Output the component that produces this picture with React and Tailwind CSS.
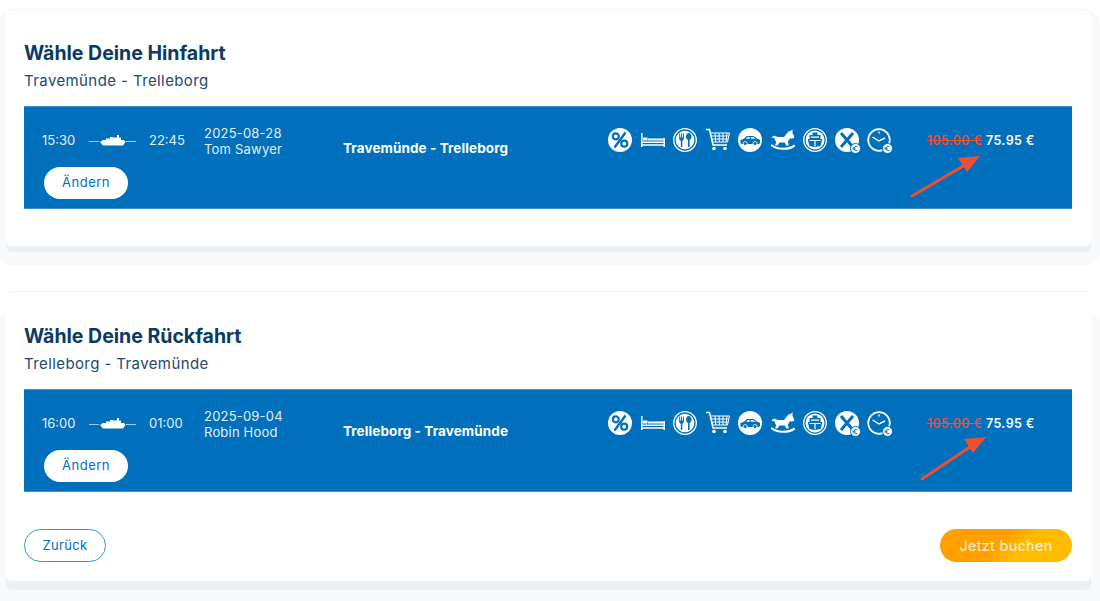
const FONT = { fontFamily: 'Inter' };

function ShipLine() {
  return (
    <svg width="48" height="14" viewBox="0 0 48 14" className="shrink-0">
      <path d="M0 7.500h10M37 7.500h10" stroke="#a9cbe6" strokeWidth="1" />
      <path d="M11 8l3-2h3V4.500h4V3h3v.5h4V1h2v2.500h2V6h3l1.500 2-2.500 3.500H14z" fill="#fff" />
    </svg>
  );
}

function Percent() {
  return (
    <svg width="24" height="24" viewBox="0 0 24 24">
      <circle cx="12" cy="12" r="12" fill="#fff" />
      <circle cx="7.800" cy="8.300" r="3" fill="none" stroke="#0070bc" strokeWidth="2.200" />
      <circle cx="16.200" cy="15.700" r="3" fill="none" stroke="#0070bc" strokeWidth="2.200" />
      <path d="M17.500 4.500L6.500 19.500" stroke="#0070bc" strokeWidth="2.400" />
    </svg>
  );
}

function Bed() {
  return (
    <svg width="24" height="24" viewBox="0 0 24 24">
      <path d="M.8 5v14M23.200 10v9" stroke="#fff" strokeWidth="1.500" />
      <path d="M1 14.200h22M1 17h22" stroke="#fff" strokeWidth="1.500" />
      <path d="M2 12.500V9.500h4.500v3zM7 12.500h16v-2H7z" fill="#fff" />
    </svg>
  );
}

function Plate() {
  return (
    <svg width="24" height="24" viewBox="0 0 24 24">
      <circle cx="12" cy="12" r="11.300" fill="none" stroke="#fff" strokeWidth="1.300" />
      <circle cx="12" cy="12" r="9.300" fill="#fff" />
      <path d="M6.200 5.500v5c0 1.300.8 2 1.600 2.300V19h1.500v-6.200c.8-.3 1.600-1 1.600-2.300v-5h-1v4h-.8v-4h-1v4h-.9v-4z" fill="#0070bc" />
      <path d="M15.700 5c-1.800 0-2.700 2-2.700 3.800 0 1.600.8 2.800 2 3.200V19h1.600v-7c1.200-.4 2-1.600 2-3.200C18.600 7 17.500 5 15.700 5z" fill="#0070bc" />
    </svg>
  );
}

function Cart() {
  return (
    <svg width="24" height="24" viewBox="0 0 24 24" fill="none" stroke="#fff">
      <path d="M0 1.500h3.500L7 17h14" strokeWidth="1.500" />
      <path d="M4.500 5h19l-2 9H6.500zM9 5l.8 9M13 5l.4 9M17 5v9M21 5l-1 9M5.300 8h17.600M6 11h16" strokeWidth="1" />
      <circle cx="8" cy="20.500" r="1.800" fill="#fff" stroke="none" />
      <circle cx="19" cy="20.500" r="1.800" fill="#fff" stroke="none" />
    </svg>
  );
}

function Car() {
  return (
    <svg width="24" height="24" viewBox="0 0 24 24">
      <circle cx="12" cy="12" r="12" fill="#fff" />
      <path d="M2.500 15v-3l3.500-1.200 2.700-2.800h7l3.300 2.800 3 1v3.200l-1 1H3.500z" fill="#0070bc" />
      <path d="M8 10.800l1.500-1.800h2.200v1.800zM12.800 9h2.500l2 1.800h-4.500z" fill="#fff" />
      <circle cx="7.200" cy="15.500" r="2" fill="#0070bc" stroke="#fff" strokeWidth=".8" />
      <circle cx="17" cy="15.500" r="2" fill="#0070bc" stroke="#fff" strokeWidth=".8" />
    </svg>
  );
}

function Horse() {
  return (
    <svg width="24" height="24" viewBox="0 0 24 24">
      <path d="M21.500 1l-1.500 1.800-2.500.7-3 3.500-1.500 2H7.500C6 9 5 8.500 4 7.800 2.500 7.500 1 8.300.5 10.500c1-.7 2-.9 2.800-.6.300 1.600 1 3 2 4L4 17.500h2.600l1.800-3h5.400l1.400 3h2.600L16.800 13c1.200-.7 1.900-1.800 2.200-3l1.800.8 2.500-1-.5-2.300-1.300-2.500z" fill="#fff" />
      <path d="M1 17.500c5 4 16 4.500 22 .5" fill="none" stroke="#fff" strokeWidth="2.200" strokeLinecap="round" />
    </svg>
  );
}

function ShipFront() {
  return (
    <svg width="24" height="24" viewBox="0 0 24 24">
      <circle cx="12" cy="12" r="11.300" fill="none" stroke="#fff" strokeWidth="1.300" />
      <circle cx="12" cy="12" r="9.500" fill="#fff" />
      <path d="M9.500 4.500h5V7h3v4h1.500v1.500l-1.500 5.500c-2 1-9 1-11 0L5 12.500V11h1.500V7h3z" fill="#0070bc" />
      <path d="M8 8.500h8v1.200H8zM6.500 12h11v1H6.500zM11.400 13h1.200v5h-1.200z" fill="#fff" />
    </svg>
  );
}

function EuroBadge() {
  return (
    <>
      <circle cx="20.500" cy="20.500" r="5" fill="#fff" stroke="#0070bc" strokeWidth="1" />
      <path d="M22.500 18.700a2.200 2.200 0 1 0 0 3.600M17.500 20h3M17.500 21.100h3" fill="none" stroke="#0070bc" strokeWidth=".9" />
    </>
  );
}

function Cross() {
  return (
    <svg width="26" height="26" viewBox="0 0 26 26">
      <circle cx="12" cy="12" r="12" fill="#fff" />
      <path d="M6 5l12 14M18 5L6 19" stroke="#0070bc" strokeWidth="3" />
      <EuroBadge />
    </svg>
  );
}

function Clock() {
  return (
    <svg width="26" height="26" viewBox="0 0 26 26">
      <circle cx="12" cy="12" r="10.800" fill="none" stroke="#fff" strokeWidth="1.700" />
      <path d="M12 3.500v2M5.500 9l6.500 4 6-3" fill="none" stroke="#fff" strokeWidth="1.400" />
      <EuroBadge />
    </svg>
  );
}

function Arrow({ line, head }) {
  return (
    <svg width="90" height="100" viewBox="0 0 90 100" className="absolute left-0 top-0">
      <path d={line} stroke="#f04e30" strokeWidth="3" strokeLinecap="round" fill="none" />
      <polygon points={head} fill="#f04e30" />
    </svg>
  );
}

function Trip({ dep, arr, date, name, route, arrowClass, arrow }) {
  return (
    <div className="flex h-[103px] border-y border-[#3d93d0] bg-[#0070bc] pl-[18px] text-[13px] text-[#e3eef8]">
      <div className="w-[301px] pt-[18px]">
        <div className="flex h-[32px] items-center">
          <span className="w-[47px]">{dep}</span>
          <ShipLine />
          <span className="ml-[12px] w-[55px]">{arr}</span>
          <div className="leading-[16px] tracking-[0.2px]">
            <div>{date}</div>
            <div>{name}</div>
          </div>
        </div>
        <button className="mt-[10px] ml-[2px] h-[32px] w-[84px] rounded-full bg-white text-[13px] tracking-[0.5px] text-[#0070bc]">Ändern</button>
      </div>
      <div className="w-[261px] pt-[33px] text-[13.500px] leading-[16px] font-bold tracking-[0.1px] text-white">{route}</div>
      <div className="mt-[21px] grid h-[26px] w-[292.500px] grid-cols-9">
        {[Percent, Bed, Plate, Cart, Car, Horse, ShipFront, Cross, Clock].map((Icon, i) => (
          <div key={i} className="flex justify-center">
            <Icon />
          </div>
        ))}
      </div>
      <div className="relative ml-[30.500px] flex-1 pt-[25px] text-[12.500px] leading-[18px] font-medium tracking-[0.4px] whitespace-nowrap">
        <span className="text-[#ee4f36] line-through">105.00 €</span>{' '}
        <span className="font-semibold text-white">75.95 €</span>
        <div className={arrowClass}>{arrow}</div>
      </div>
    </div>
  );
}

export default function App() {
  return (
    <div className="h-[601px] overflow-hidden bg-white text-[#0b3a63]" style={FONT}>
      <div className="px-[6px] pt-[9px] pr-[9px]">
        <section className="h-[237px] rounded-[6px] border-t border-[#f1f3f6] bg-white px-[18px] pt-[32px] pr-[19px] shadow-[0_6px_0_0_#edf0f3,0_10px_0_9px_#f8f9fb]">
          <h2 className="text-[19.500px] leading-[22px] font-bold">Wähle Deine Hinfahrt</h2>
          <p className="mt-[7px] text-[15px] leading-[20px] tracking-[0.4px] text-[#24496c]">Travemünde - Trelleborg</p>
          <div className="mt-[15px]">
            <Trip
              dep="15:30"
              arr="22:45"
              date="2025-08-28"
              name="Tom Sawyer"
              route="Travemünde - Trelleborg"
              arrowClass="absolute left-[-17px] top-[-1px]"
              arrow={<Arrow line="M2 90L60 56" head="70,50 48,52 57,66" />}
            />
          </div>
        </section>
        <section className="mt-[45px] h-[290px] rounded-[6px] border-t border-[#f1f3f6] bg-white px-[18px] pt-[33px] pr-[19px] shadow-[0_9px_0_0_#edf0f3,0_30px_0_9px_#f8f9fb]">
          <h2 className="text-[19.500px] leading-[22px] font-bold">Wähle Deine Rückfahrt</h2>
          <p className="mt-[7px] text-[15px] leading-[20px] tracking-[0.4px] text-[#24496c]">Trelleborg - Travemünde</p>
          <div className="mt-[15px]">
            <Trip
              dep="16:00"
              arr="01:00"
              date="2025-09-04"
              name="Robin Hood"
              route="Trelleborg - Travemünde"
              arrowClass="absolute left-[-7px] top-[-1px]"
              arrow={<Arrow line="M2 90L56 54" head="66,48 44,50 53,64" />}
            />
          </div>
          <div className="mt-[37px] flex justify-between">
            <button className="h-[33px] w-[82px] rounded-full border border-[#3f93d3] text-[13px] tracking-[0.3px] text-[#0070bc]">Zurück</button>
            <button className="h-[33px] w-[132px] rounded-full bg-[linear-gradient(135deg,#ff9f00_0%,#ff9f00_45%,#ffbb00_60%,#ffbb00_100%)] text-[14.500px] tracking-[0.3px] text-[#fff3d6]">Jetzt buchen</button>
          </div>
        </section>
      </div>
    </div>
  );
}
